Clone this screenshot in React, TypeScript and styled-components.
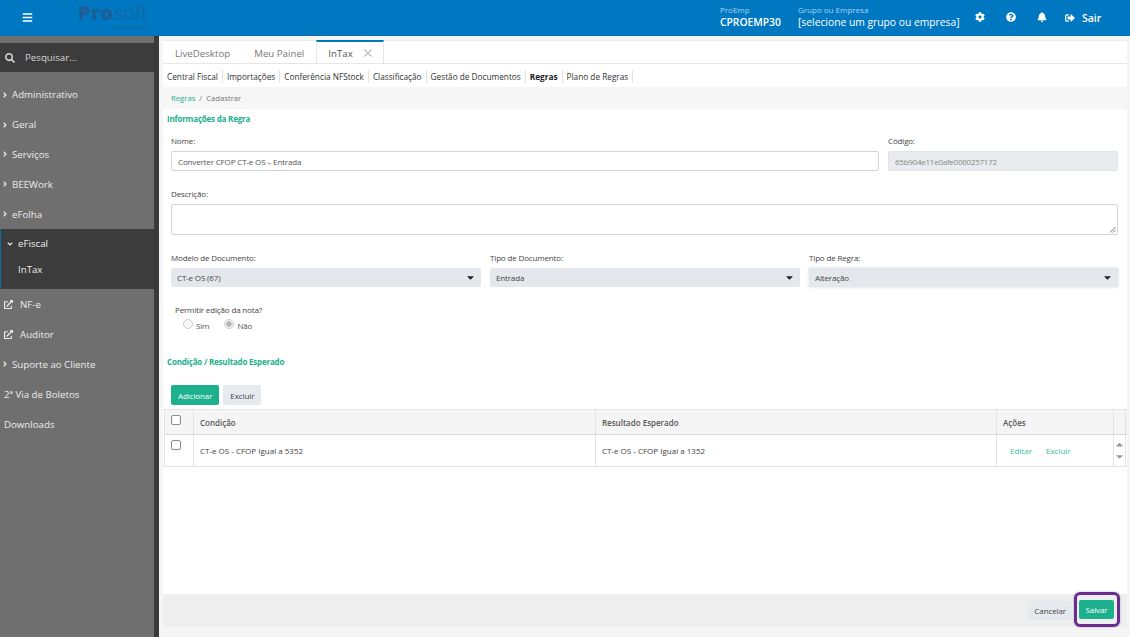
import React from 'react';
import styled, {createGlobalStyle} from 'styled-components';
import {FaBars, FaBell, FaCaretDown, FaCaretUp, FaCog, FaQuestionCircle, FaSearch, FaSignOutAlt, FaAngleRight, FaAngleDown, FaExternalLinkAlt} from 'react-icons/fa';

const GlobalStyle = createGlobalStyle`
    html, body {
        margin: 0;
        height: 100%;
        overflow: hidden;
    }

    body {
        font-family: "Open Sans", "Noto Sans", sans-serif;
        font-size: 8px;
        color: #444;
        background: #f5f5f5;
    }

    * {
        box-sizing: border-box;
    }
`

const Page = styled.div`
    width: 1130px;
    height: 637px;
    display: flex;
    flex-direction: column;
    overflow: hidden;
`

/* topo */
const Header = styled.header`
    height: 36px;
    flex-shrink: 0;
    background: #0078c1;
    border-bottom: 1px solid #0a6cab;
    display: flex;
    align-items: center;
    color: #fff;
`

const Burger = styled.div`
    width: 54px;
    padding-left: 22px;
    display: flex;
    font-size: 11px;
`

const Logo = styled.div`
    width: 666px;
    padding-left: 24px;
    display: flex;
    flex-direction: column;
    color: #1c5f96;
    margin-top: -3px;
`

const LogoName = styled.div`
    font-size: 20px;
    line-height: 20px;
    font-weight: 300;
    letter-spacing: 0.3px;

    b {
        font-weight: 800;
    }
`

const LogoBy = styled.div`
    font-size: 6px;
    line-height: 6px;
    margin: 1px 0 0 35px;
`

const HeaderInfo = styled.div<{ $width: string }>`
    width: ${p => p.$width};
    display: flex;
    flex-direction: column;
    margin-top: -2px;
`

const InfoLabel = styled.span`
    font-size: 8px;
    line-height: 11px;
    color: #a9d3ee;
`

const InfoValue = styled.span<{ $bold?: boolean }>`
    font-size: 10.3px;
    line-height: 14px;
    font-weight: ${p => p.$bold ? 600 : 400};
    white-space: nowrap;
`

const HeaderIcon = styled.div<{ $width: string }>`
    width: ${p => p.$width};
    display: flex;
    font-size: 10px;
    margin-top: -1px;
`

const Logout = styled.div`
    display: flex;
    align-items: center;
    gap: 7px;
    font-size: 10.5px;
    font-weight: 600;
    margin-left: 17px;

    svg {
        font-size: 10px;
    }
`

/* corpo */
const Body = styled.div`
    flex: 1;
    display: flex;
    min-height: 0;
`

const Sidebar = styled.nav`
    width: 159px;
    flex-shrink: 0;
    background: #6f6f6f;
    border-right: 5px solid #3a3a3a;
    padding-top: 7px;
    color: #ececec;
    font-size: 9.7px;
`

const SearchBox = styled.div`
    height: 29px;
    background: #3c3c3c;
    display: flex;
    align-items: center;
    gap: 10px;
    padding-left: 5px;
    margin-bottom: 8px;
    color: #d6d6d6;

    svg {
        font-size: 10px;
    }
`

const MenuItem = styled.div`
    height: 29.8px;
    display: flex;
    align-items: center;
    padding-left: 1px;
    gap: 3px;
    white-space: nowrap;

    svg {
        font-size: 8px;
    }
`

const PlainItem = styled(MenuItem)`
    padding-left: 4px;
`

const ExternalItem = styled(MenuItem)`
    padding-left: 4px;
    gap: 7px;

    svg {
        font-size: 9px;
    }
`

const MenuGroup = styled.div`
    background: #3c3c3c;
    border-left: 1px solid #0a6cab;
    height: 60px;
    margin-bottom: 1px;
    display: flex;
    flex-direction: column;
`

const GroupTitle = styled.div`
    height: 30px;
    display: flex;
    align-items: center;
    gap: 4px;
    padding-left: 5px;

    svg {
        font-size: 8px;
    }
`

const GroupChild = styled.div`
    height: 22px;
    padding-left: 17px;
    display: flex;
    align-items: center;
`

const Main = styled.main`
    flex: 1;
    min-width: 0;
    padding: 4px 3px 10px 4px;
    background: #f5f5f5;
    display: flex;
    flex-direction: column;
`

const Tabs = styled.div`
    height: 24px;
    flex-shrink: 0;
    background: #fff;
    border-bottom: 1px solid #e6e6e6;
    border-top: 1px solid #ececec;
    display: flex;
    font-size: 9.7px;
    color: #666;
`

const Tab = styled.div<{ $active?: boolean }>`
    height: 24px;
    margin-top: -1px;
    display: flex;
    align-items: center;
    gap: 11px;
    padding: 0 11px;
    border-top: 2px solid ${p => p.$active ? '#0078c1' : 'transparent'};
    border-left: 1px solid ${p => p.$active ? '#e6e6e6' : 'transparent'};
    border-right: 1px solid ${p => p.$active ? '#e6e6e6' : 'transparent'};
    color: ${p => p.$active ? '#555' : '#777'};
`

const TabClose = styled.svg`
    width: 8px;
    height: 8px;
    stroke: #bbb;
    stroke-width: 1.2;
`

const SubNav = styled.div`
    height: 23px;
    flex-shrink: 0;
    background: #fff;
    display: flex;
    align-items: center;
    padding-top: 1px;
`

const SubLink = styled.span<{ $active?: boolean }>`
    padding: 0 4px;
    line-height: 13px;
    font-weight: ${p => p.$active ? 700 : 400};
    color: ${p => p.$active ? '#222' : '#333'};
    border-right: 1px solid #e2e2e2;
    white-space: nowrap;
    font-size: 8.25px;
`

const Breadcrumb = styled.div`
    height: 22px;
    flex-shrink: 0;
    background: #f6f6f6;
    display: flex;
    align-items: center;
    gap: 4px;
    padding-left: 8px;
    font-size: 7.7px;
    color: #777;
`

const Crumb = styled.span`
    color: #1fb08f;
`

const Panel = styled.section`
    flex: 1;
    min-height: 0;
    background: #fff;
    padding-top: 3px;
    display: flex;
    flex-direction: column;
    letter-spacing: -0.15px;
`

const SectionTitle = styled.h3<{ $top?: string }>`
    margin: ${p => p.$top || '0'} 0 0 4px;
    font-size: 8px;
    line-height: 14px;
    font-weight: 700;
    letter-spacing: -0.2px;
    color: #1cb08d;
`

const FormRow = styled.div<{ $columns: string; $top: string }>`
    display: grid;
    grid-template-columns: ${p => p.$columns};
    column-gap: 9px;
    margin: ${p => p.$top} 9px 0 8px;
`

const Field = styled.div`
    display: flex;
    flex-direction: column;
`

const FieldLabel = styled.label`
    font-size: 8px;
    line-height: 12px;
    margin-bottom: 4px;
    color: #444;
`

const TextInput = styled.div<{ $disabled?: boolean }>`
    height: 20px;
    border: 1px solid ${p => p.$disabled ? '#e0e3e7' : '#d2d6db'};
    border-radius: 2px;
    background: ${p => p.$disabled ? '#e9ebee' : '#fff'};
    color: ${p => p.$disabled ? '#888' : '#555'};
    padding: 0 6px;
    display: flex;
    align-items: center;
    font-size: 8px;
    letter-spacing: ${p => p.$disabled ? '-0.25px' : 'inherit'};
`

const TextArea = styled.div`
    height: 31px;
    border: 1px solid #d2d6db;
    border-radius: 2px;
    background: #fff;
    position: relative;

    svg {
        position: absolute;
        right: 1px;
        bottom: 1px;
        width: 7px;
        height: 7px;
        stroke: #777;
    }
`

const Select = styled.div<{ $focused?: boolean }>`
    height: 19px;
    border-radius: 2px;
    background: #e4e7eb;
    box-shadow: ${p => p.$focused ? '0 0 0 1.5px #eef2f6' : 'none'};
    padding: 0 5px 0 6px;
    display: flex;
    align-items: center;
    justify-content: space-between;
    font-size: 8px;
    color: #444;

    svg {
        color: #222;
        font-size: 11px;
    }
`

const RadioBlock = styled.div`
    margin: 17px 0 0 12px;
    height: 33px;

    label {
        display: block;
        margin-bottom: 3px;
    }
`

const RadioLine = styled.div`
    display: flex;
    gap: 15px;
    padding-left: 8px;
`

const RadioOption = styled.div`
    display: flex;
    align-items: center;
    gap: 3px;
    font-size: 8px;
    line-height: 14px;
    color: #555;
`

const RadioDot = styled.span<{ $checked?: boolean }>`
    width: 10px;
    height: 10px;
    border-radius: 50%;
    border: 1px solid #ccc;
    background: ${p => p.$checked ? 'radial-gradient(circle, #b5b5b5 0 2.5px, #f2f2f2 3px)' : '#f8f8f8'};
    margin-top: -4px;
`

const ButtonRow = styled.div`
    display: flex;
    gap: 4px;
    margin: 16px 0 4px 8px;
`

const Button = styled.button<{ $primary?: boolean }>`
    height: 20px;
    border: 0;
    border-radius: 2px;
    padding: 0 7px;
    font-family: inherit;
    font-size: 8px;
    letter-spacing: -0.1px;
    background: ${p => p.$primary ? '#1cb08d' : '#e6e9ed'};
    color: ${p => p.$primary ? '#fff' : '#444'};
`

const Table = styled.div`
    margin-left: 1px;
    border: solid #e3e3e3;
    border-width: 1px 0 1px 1px;
    letter-spacing: 0;
`

const TableRow = styled.div<{ $head?: boolean }>`
    display: grid;
    grid-template-columns: 29px 402px 401px 117px 12px;
    height: ${p => p.$head ? '25px' : '31px'};
    background: ${p => p.$head ? '#f5f5f5' : '#fff'};
    border-bottom: ${p => p.$head ? '1px solid #d8d8d8' : '0'};
    font-size: 8px;
    font-weight: ${p => p.$head ? 600 : 400};
    color: ${p => p.$head ? '#555' : '#444'};
`

const Cell = styled.div`
    display: flex;
    align-items: center;
    padding-left: 6px;
    gap: 14px;
    border-right: 1px solid #e3e3e3;
`

const CheckCell = styled(Cell)`
    padding-left: 6px;
    align-items: flex-start;
    padding-top: 5px;
`

const Checkbox = styled.span`
    width: 10px;
    height: 10px;
    border: 1px solid #8a8a8a;
    border-radius: 2px;
    background: #fff;
`

const ActionLink = styled.span`
    color: #35bd9c;

    &:first-child {
        margin-left: 7px;
    }
`

const ScrollCell = styled.div`
    display: flex;
    flex-direction: column;
    align-items: center;
    color: #999;
    padding-top: 3px;
    font-size: 11px;
    border-right: 1px solid #e3e3e3;

    svg {
        margin-top: 1px;
    }
`

const Spacer = styled.div`
    flex: 1;
`

const Footer = styled.footer`
    height: 33px;
    flex-shrink: 0;
    background: #eeeeee;
    display: flex;
    align-items: center;
    justify-content: flex-end;
    gap: 2px;
    padding-right: 7px;
`

const CancelButton = styled(Button)`
    padding: 0 6px;
    height: 19px;
`

const Highlight = styled.div`
    border: 3px solid #6a2c91;
    border-radius: 6px;
    padding: 5px 3px 5px 2px;
    margin-top: -2px;
    display: flex;
    box-shadow: 0 0 2px rgba(0, 0, 0, 0.35);
`

const SaveButton = styled(Button)`
    width: 35px;
    padding: 0;
    height: 19px;
`

const menu = ['Administrativo', 'Geral', 'Serviços', 'BEEWork', 'eFolha']
const subMenu = ['Central Fiscal', 'Importações', 'Conferência NFStock', 'Classificação', 'Gestão de Documentos']

export default function App() {
    return (
        <Page>
            <GlobalStyle/>
            <Header>
                <Burger><FaBars/></Burger>
                <Logo>
                    <LogoName><b>Pro</b>soft</LogoName>
                    <LogoBy>by alterdata</LogoBy>
                </Logo>
                <HeaderInfo $width="78px">
                    <InfoLabel>ProEmp</InfoLabel>
                    <InfoValue $bold>CPROEMP30</InfoValue>
                </HeaderInfo>
                <HeaderInfo $width="177px">
                    <InfoLabel>Grupo ou Empresa</InfoLabel>
                    <InfoValue>[selecione um grupo ou empresa]</InfoValue>
                </HeaderInfo>
                <HeaderIcon $width="31px"><FaCog/></HeaderIcon>
                <HeaderIcon $width="31px"><FaQuestionCircle/></HeaderIcon>
                <HeaderIcon $width="11px"><FaBell/></HeaderIcon>
                <Logout><FaSignOutAlt/>Sair</Logout>
            </Header>
            <Body>
                <Sidebar>
                    <SearchBox><FaSearch/>Pesquisar...</SearchBox>
                    {menu.map(item => (
                        <MenuItem key={item}><FaAngleRight/>{item}</MenuItem>
                    ))}
                    <MenuGroup>
                        <GroupTitle><FaAngleDown/>eFiscal</GroupTitle>
                        <GroupChild>InTax</GroupChild>
                    </MenuGroup>
                    <ExternalItem><FaExternalLinkAlt/>NF-e</ExternalItem>
                    <ExternalItem><FaExternalLinkAlt/>Auditor</ExternalItem>
                    <MenuItem><FaAngleRight/>Suporte ao Cliente</MenuItem>
                    <PlainItem>2ª Via de Boletos</PlainItem>
                    <PlainItem>Downloads</PlainItem>
                </Sidebar>
                <Main>
                    <Tabs>
                        <Tab>LiveDesktop</Tab>
                        <Tab>Meu Painel</Tab>
                        <Tab $active>
                            InTax
                            <TabClose viewBox="0 0 8 8"><path d="M0.5 0.5l7 7M7.5 0.5l-7 7"/></TabClose>
                        </Tab>
                    </Tabs>
                    <SubNav>
                        {subMenu.map(item => <SubLink key={item}>{item}</SubLink>)}
                        <SubLink $active>Regras</SubLink>
                        <SubLink>Plano de Regras</SubLink>
                    </SubNav>
                    <Breadcrumb><Crumb>Regras</Crumb> / <span>Cadastrar</span></Breadcrumb>
                    <Panel>
                        <SectionTitle>Informações da Regra</SectionTitle>
                        <FormRow $columns="708px 230px" $top="9px">
                            <Field>
                                <FieldLabel>Nome:</FieldLabel>
                                <TextInput>Converter CFOP CT-e OS – Entrada</TextInput>
                            </Field>
                            <Field>
                                <FieldLabel>Código:</FieldLabel>
                                <TextInput $disabled>65b904e11e0afe0060257172</TextInput>
                            </Field>
                        </FormRow>
                        <FormRow $columns="1fr" $top="17px">
                            <Field>
                                <FieldLabel>Descrição:</FieldLabel>
                                <TextArea>
                                    <svg viewBox="0 0 7 7"><path d="M1 6.5l5.5-5.5M4 6.5l2.5-2.5"/></svg>
                                </TextArea>
                            </Field>
                        </FormRow>
                        <FormRow $columns="310px 310px 309px" $top="17px">
                            <Field>
                                <FieldLabel>Modelo de Documento:</FieldLabel>
                                <Select>CT-e OS (67)<FaCaretDown/></Select>
                            </Field>
                            <Field>
                                <FieldLabel>Tipo de Documento:</FieldLabel>
                                <Select>Entrada<FaCaretDown/></Select>
                            </Field>
                            <Field>
                                <FieldLabel>Tipo de Regra:</FieldLabel>
                                <Select $focused>Alteração<FaCaretDown/></Select>
                            </Field>
                        </FormRow>
                        <RadioBlock>
                            <FieldLabel>Permitir edição da nota?</FieldLabel>
                            <RadioLine>
                                <RadioOption><RadioDot/>Sim</RadioOption>
                                <RadioOption><RadioDot $checked/>Não</RadioOption>
                            </RadioLine>
                        </RadioBlock>
                        <SectionTitle $top="18px">Condição / Resultado Esperado</SectionTitle>
                        <ButtonRow>
                            <Button $primary>Adicionar</Button>
                            <Button>Excluir</Button>
                        </ButtonRow>
                        <Table>
                            <TableRow $head>
                                <CheckCell><Checkbox/></CheckCell>
                                <Cell>Condição</Cell>
                                <Cell>Resultado Esperado</Cell>
                                <Cell>Ações</Cell>
                                <Cell/>
                            </TableRow>
                            <TableRow>
                                <CheckCell><Checkbox/></CheckCell>
                                <Cell>CT-e OS - CFOP Igual a 5352</Cell>
                                <Cell>CT-e OS - CFOP Igual a 1352</Cell>
                                <Cell>
                                    <ActionLink>Editar</ActionLink>
                                    <ActionLink>Excluir</ActionLink>
                                </Cell>
                                <ScrollCell><FaCaretUp/><FaCaretDown/></ScrollCell>
                            </TableRow>
                        </Table>
                        <Spacer/>
                        <Footer>
                            <CancelButton>Cancelar</CancelButton>
                            <Highlight><SaveButton $primary>Salvar</SaveButton></Highlight>
                        </Footer>
                    </Panel>
                </Main>
            </Body>
        </Page>
    );
}
